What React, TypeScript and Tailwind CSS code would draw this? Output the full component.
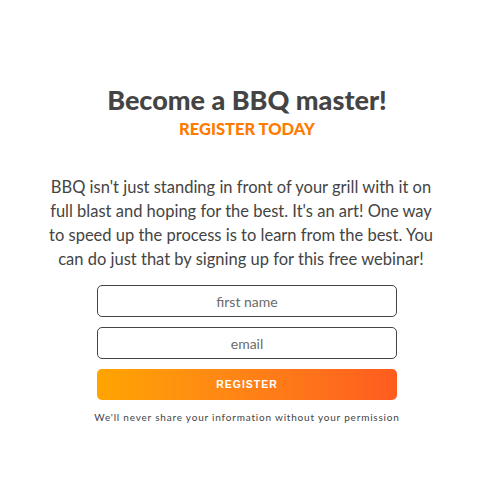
export default function App() {
    return (
        <div className="w-[482px] h-[480px] bg-white flex flex-col items-center font-['Lato',sans-serif]">
            <h1 className="mt-[84px] ml-[12px] text-[27px] leading-[32px] font-black text-[#444444]">Become a BBQ master!</h1>
            <h2 className="mt-[3px] ml-[12px] text-[16.5px] leading-[20px] font-black text-[#ff7b00]">REGISTER TODAY</h2>

            <p className="mt-[36px] w-[386px] text-center text-[16.5px] leading-[24px] text-[#444444]">
                BBQ isn't just standing in front of your grill with it on full blast and hoping for the best. It's an art! One way to speed up the process is to learn from the best. You can do just that by signing up for this free webinar!
            </p>

            <form className="mt-[14px] ml-[12px] w-[300px] flex flex-col gap-[10px]" onSubmit={(e) => e.preventDefault()}>
                <input
                    type="text"
                    placeholder="first name"
                    className="h-[32px] w-full rounded-[5px] border border-[#444444] text-center text-[14px] placeholder:text-[#6b6b6b] outline-none"
                />
                <input
                    type="email"
                    placeholder="email"
                    className="h-[32px] w-full rounded-[5px] border border-[#444444] text-center text-[14px] placeholder:text-[#6b6b6b] outline-none"
                />
                <button
                    type="submit"
                    className="h-[31px] w-full rounded-[5px] bg-gradient-to-r from-[#ffa400] to-[#ff5b1f] text-white text-[10.5px] font-bold tracking-[1px] font-['Liberation_Sans',sans-serif]"
                >
                    REGISTER
                </button>
            </form>

            <p className="mt-[10px] ml-[12px] text-[10px] tracking-[0.8px] text-[#444444]">
                We'll never share your information without your permission
            </p>
        </div>
    );
}
